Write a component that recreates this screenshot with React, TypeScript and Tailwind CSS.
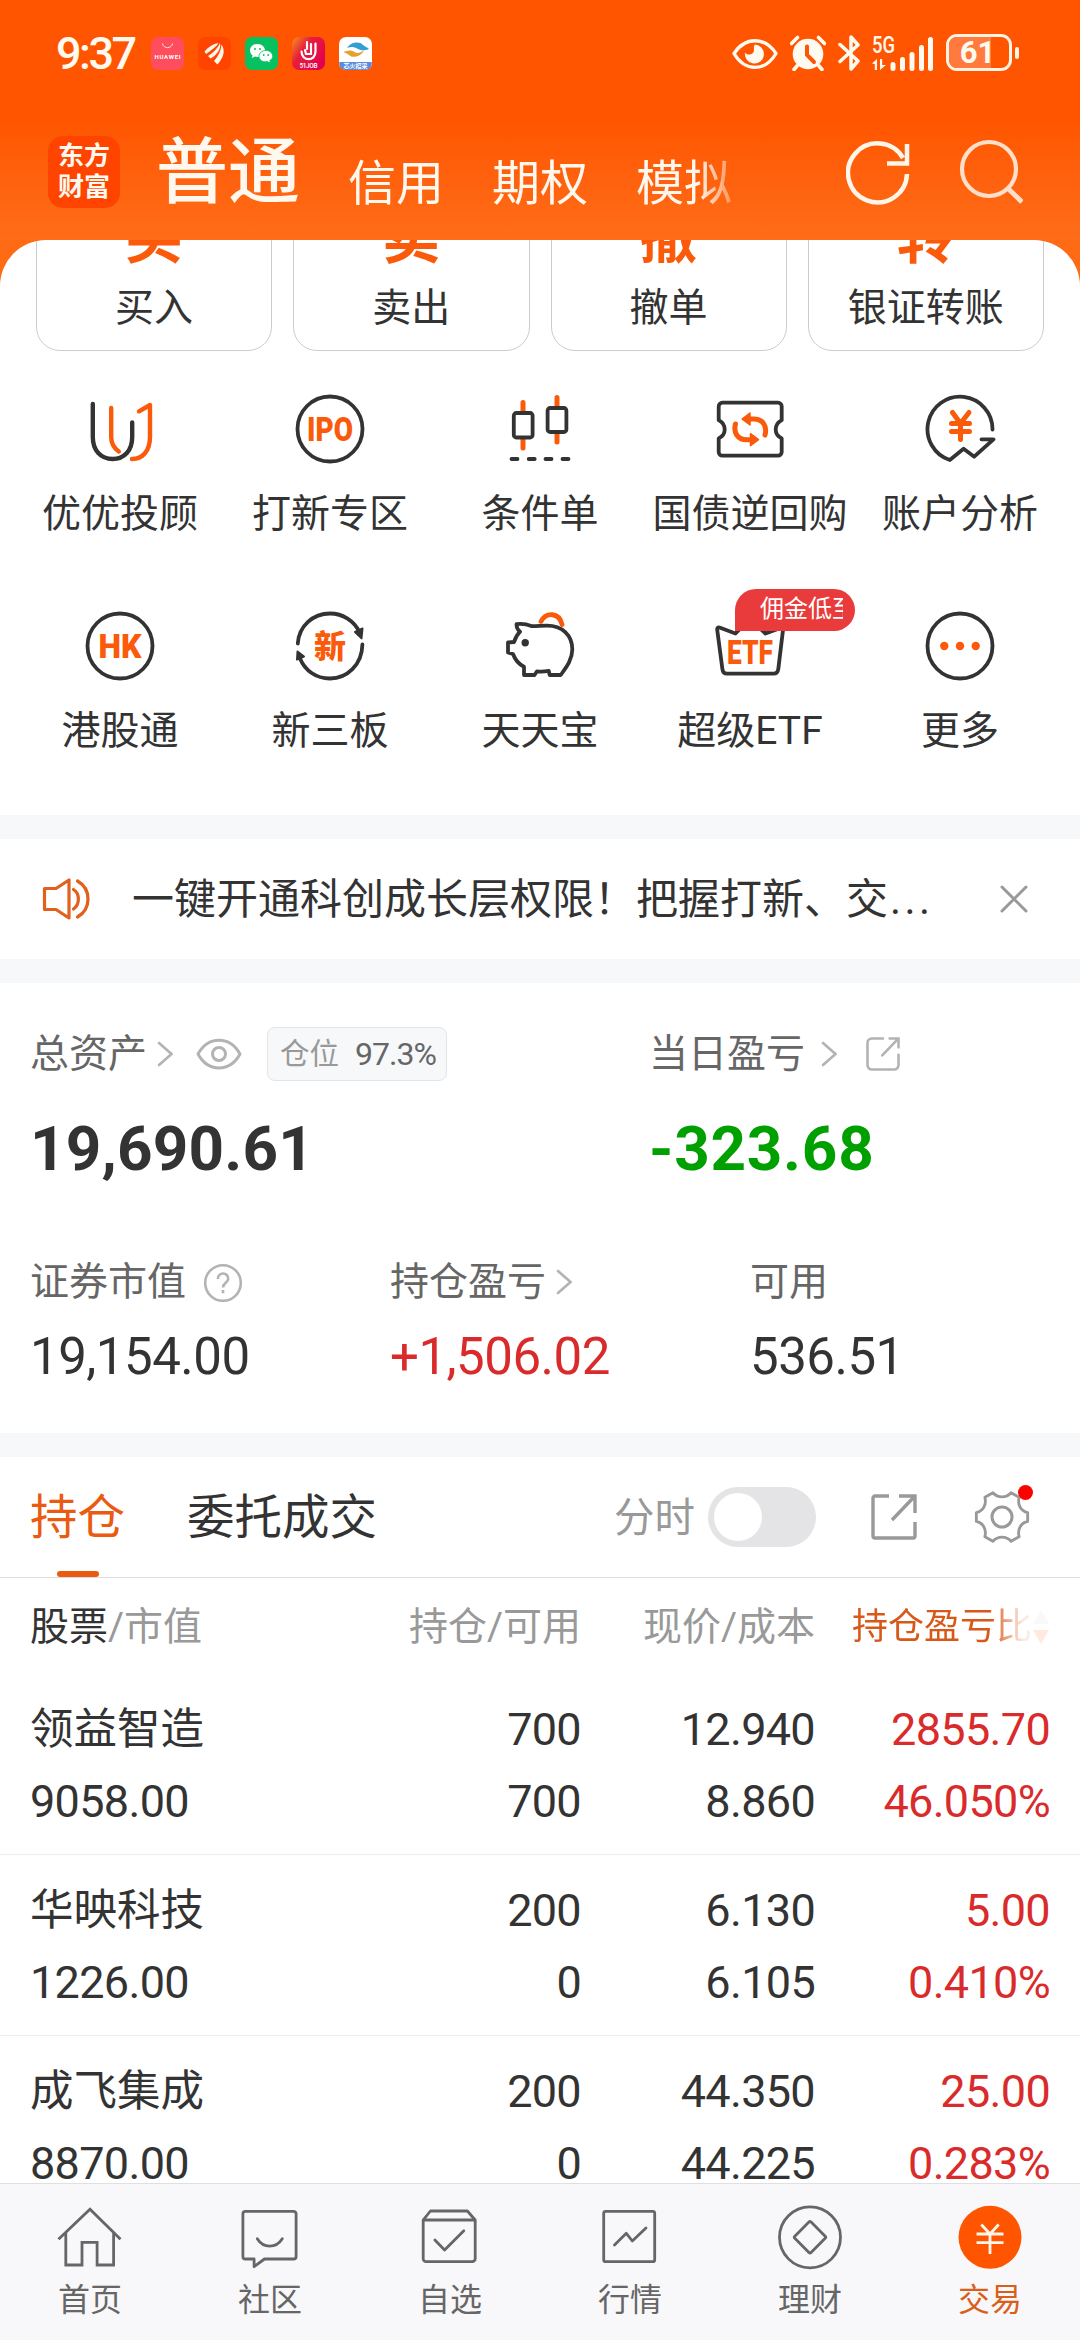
import React from 'react';
import clsx from 'clsx';

type Holding = {
  name: string;
  value: string;
  total: string;
  available: string;
  price: string;
  cost: string;
  profit: string;
  ratio: string;
};

const holdings: Holding[] = [
  { name: '领益智造', value: '9058.00', total: '700', available: '700', price: '12.940', cost: '8.860', profit: '2855.70', ratio: '46.050%' },
  { name: '华映科技', value: '1226.00', total: '200', available: '0', price: '6.130', cost: '6.105', profit: '5.00', ratio: '0.410%' },
  { name: '成飞集成', value: '8870.00', total: '200', available: '0', price: '44.350', cost: '44.225', profit: '25.00', ratio: '0.283%' },
];

const quickActions = [
  { glyph: '买', label: '买入' },
  { glyph: '卖', label: '卖出' },
  { glyph: '撤', label: '撤单' },
  { glyph: '转', label: '银证转账' },
];

const DARK = '#333333';
const ORANGE = '#fa5a0a';

const Icon = ({ children, className = 'size-[72px]' }: { children: React.ReactNode; className?: string }) => (
  <svg viewBox="0 0 72 72" fill="none" strokeLinecap="round" strokeLinejoin="round" className={clsx('block shrink-0', className)}>
    {children}
  </svg>
);

const IconText = ({ children, y = 47.5, size = 32, width }: { children: string; y?: number; size?: number; width?: number }) => (
  <text x="36" y={y} fontSize={size} fontWeight="900" textAnchor="middle" fill={ORANGE} textLength={width} lengthAdjust="spacingAndGlyphs">
    {children}
  </text>
);

const services = [
  {
    label: '优优投顾',
    icon: (
      <Icon>
        <g strokeWidth="4.4">
          <path d="M8.8 11v33c0 13.500 8 22 19.800 22s19.600-8.500 19.600-22V29.500" stroke={DARK} />
          <path d="M27.200 15v29c0 6.500 2.500 11 7.600 14.500M55 18.300l11-6.300v32c0 14-7.500 22-18 22" stroke={ORANGE} />
        </g>
      </Icon>
    ),
  },
  {
    label: '打新专区',
    icon: (
      <Icon>
        <circle cx="36" cy="36" r="32.500" stroke={DARK} strokeWidth="3.800" />
        <IconText width={46} size={33}>IPO</IconText>
      </Icon>
    ),
  },
  {
    label: '条件单',
    icon: (
      <Icon>
        <path d="M19 9.500V19M19 46v9M53 4.500V14M53 40v9" stroke={ORANGE} strokeWidth="5" />
        <g stroke={DARK} strokeWidth="3.800">
          <rect x="9.800" y="20" width="18.800" height="24.500" rx="2.500" />
          <rect x="43.600" y="15" width="18.800" height="24" rx="2.500" />
          <path d="M7.500 66h6M24.700 66h6M41.500 66h6M58.500 66h6" />
        </g>
      </Icon>
    ),
  },
  {
    label: '国债逆回购',
    icon: (
      <Icon>
        <path
          d="M8.400 9.700h55.600a3.700 3.700 0 0 1 3.700 3.700v13.800c-8 4.500-8 14 0 18.200v13.600a3.700 3.700 0 0 1-3.700 3.700H8.400a3.700 3.700 0 0 1-3.700-3.700V45.400c8-4.200 8-13.700 0-18.200V13.400a3.700 3.700 0 0 1 3.700-3.700z"
          stroke={DARK}
          strokeWidth="3.800"
        />
        <path d="M21.500 31c-2.500 9 2.500 15.700 11 15.700h5M51 42c2.500-9-2.500-16-11-16h-5" stroke={ORANGE} strokeWidth="5" />
        <path d="M28 26l8-6v12zM44.500 46.700l-8-6v12z" fill={ORANGE} stroke={ORANGE} strokeWidth="1.500" />
      </Icon>
    ),
  },
  {
    label: '账户分析',
    icon: (
      <Icon>
        <path d="M68.500 36.500A32.500 32.500 0 1 0 25.800 67l13.800-11.300 10.600 8 19.300-17.400H57.500" stroke={DARK} strokeWidth="3.800" />
        <path d="M28.500 19.500l8 11 8.500-11M36.500 31v15.500M27.500 30.500h18M27.500 38.500h18" stroke={ORANGE} strokeWidth="5" />
      </Icon>
    ),
  },
  {
    label: '港股通',
    icon: (
      <Icon>
        <circle cx="36" cy="36" r="32.500" stroke={DARK} strokeWidth="3.800" />
        <IconText width={43} size={33}>HK</IconText>
      </Icon>
    ),
  },
  {
    label: '新三板',
    icon: (
      <Icon>
        <path d="M3.800 33.500C5 16 19 3.500 36 3.500c13 0 24 7.500 29.500 18.500M68.400 34.500C68 55 53 68.500 36 68.500c-14 0-25-8-30-20" stroke={DARK} strokeWidth="3.800" />
        <path d="M61 22l7.500-3.500-1 9.800zM3.500 41.500l6.500 5-7 3z" fill={DARK} stroke={DARK} strokeWidth="2" />
        <IconText size={32} y={48}>新</IconText>
      </Icon>
    ),
  },
  {
    label: '天天宝',
    icon: (
      <Icon>
        <path
          d="M4 32.500v10l5 1.500c2 5.500 5.500 10 11 12.800V65h10.500l2.500-3.700c4 .5 7.500.3 11.700-.5l1 4.200h11c5-7 11.600-15 11.600-25.500C68.300 25 58 15.700 43 15.700c-5 0-9.500.5-15 .5-4.500-1.700-9.500-3-15.500-2 0 3 1 5.500 3.500 7.500-2.500 2.500-4.500 6-6 10.300z"
          stroke={DARK}
          strokeWidth="3.800"
        />
        <circle cx="21.200" cy="32.700" r="3.700" fill={DARK} />
        <path d="M37 11.500c5-9.500 18-9.500 21 3" stroke={ORANGE} strokeWidth="4.800" />
      </Icon>
    ),
  },
  {
    label: '超级ETF',
    badge: '佣金低至',
    icon: (
      <Icon>
        <path
          d="M5.500 17.500l16 6L36 9l15.500 14.500 15-5.500c1.800-.6 2.700.3 2.500 2l-4.700 39c-.4 3-2 4.700-4.700 4.700H13c-2.800 0-4.300-1.700-4.600-4.700L3.200 19.800c-.2-1.800.7-2.900 2.300-2.300z"
          stroke={DARK}
          strokeWidth="3.800"
        />
        <IconText y={53.5} width={46} size={33}>ETF</IconText>
      </Icon>
    ),
  },
  {
    label: '更多',
    icon: (
      <Icon>
        <circle cx="36" cy="36" r="32.500" stroke={DARK} strokeWidth="3.800" />
        <g fill={ORANGE}>
          <circle cx="20.300" cy="36" r="4.200" />
          <circle cx="36" cy="36" r="4.200" />
          <circle cx="51.700" cy="36" r="4.200" />
        </g>
      </Icon>
    ),
  },
];

const navItems = [
  { label: '首页', icon: <path d="M4.500 38.300L36 8.300l30.500 30M11.800 32v32H28V41.300h15.100V64h16.500V32" strokeLinecap="butt" strokeLinejoin="miter" /> },
  {
    label: '社区',
    icon: (
      <>
        <path d="M11.500 10.300h48a2.600 2.600 0 0 1 2.600 2.600v42.500a2.600 2.600 0 0 1-2.600 2.600H30.500l-10.400 7.700V58h-8.600a2.600 2.600 0 0 1-2.600-2.600V12.900a2.600 2.600 0 0 1 2.600-2.600z" />
        <path d="M23.300 37.700c6 9.800 18.800 9.800 25 0" />
      </>
    ),
  },
  {
    label: '自选',
    icon: (
      <>
        <path d="M9.200 19h52v38.700a3 3 0 0 1-3 3h-46a3 3 0 0 1-3-3zl7.200-9h37l7.800 9" />
        <path d="M20.900 39l9.700 10 19.200-19.300" />
      </>
    ),
  },
  {
    label: '行情',
    icon: (
      <>
        <rect x="9.700" y="10.300" width="51" height="50.400" rx="2" />
        <path d="M20.500 44l11.800-11.700 6 7.700L52 27" />
      </>
    ),
  },
  {
    label: '理财',
    icon: (
      <>
        <circle cx="36" cy="36.300" r="30.500" />
        <rect x="24.500" y="24.800" width="23" height="23" rx="1.500" transform="rotate(45 36 36.300)" />
      </>
    ),
  },
  {
    label: '交易',
    active: true,
    icon: (
      <>
        <circle cx="36" cy="36.300" r="31.500" fill="#ff5500" stroke="none" />
        <path d="M27.300 23.500L36 33l8.700-9.500M36 33v20M22.500 33h27M22.500 41.700h27" stroke="#fff6ea" strokeLinecap="butt" />
      </>
    ),
  },
];

const Chevron = ({ className }: { className?: string }) => (
  <svg viewBox="0 0 16 26" fill="none" stroke="#b3b3b3" strokeWidth="2.600" strokeLinecap="round" className={clsx('h-[26px] w-4 shrink-0', className)}>
    <path d="M2 2l12.500 11L2 24" />
  </svg>
);

const Share = ({ className, rounded }: { className?: string; rounded?: boolean }) => (
  <svg viewBox="0 0 46 46" fill="none" stroke="currentColor" strokeLinecap={rounded ? 'round' : 'butt'} className={clsx('shrink-0', className)}>
    <path d={rounded ? 'M23 2H8a6 6 0 0 0-6 6v30a6 6 0 0 0 6 6h30a6 6 0 0 0 6-6V24' : 'M18 2H4a2 2 0 0 0-2 2v38a2 2 0 0 0 2 2h38a2 2 0 0 0 2-2V28'} />
    <path d={rounded ? 'M32 2h12v12M43 3L22 25' : 'M28 2h16v17M43 3L21 26'} />
  </svg>
);

const StatusBar = () => (
  <div className="flex h-[108px] items-start pt-[34px] pr-[61px] pl-[56px]">
    <span className="mt-[1px] w-[83px] text-[45px] leading-[38px] font-medium tracking-[-0.055em] text-[#fffaf0]">9:37</span>
    <div className="mt-[3px] ml-3 flex gap-[14px]">
      <svg viewBox="0 0 33 33" className="size-[33px]">
        <rect width="33" height="33" rx="7" fill="#ff4d5e" />
        <path d="M11.500 6.500c.5 5.500 9.500 5.500 10 0" fill="none" stroke="#ffe0e0" strokeWidth="1" />
        <text x="16.500" y="21.500" fontSize="6" fontWeight="700" textAnchor="middle" textLength="26" fill="#fff">HUAWEI</text>
      </svg>
      <svg viewBox="0 0 33 33" className="size-[33px]">
        <rect width="33" height="33" rx="7" fill="#ff4400" />
        <path d="M6.500 14.500C10 10 15 7 20.500 6c-2 3.500-6.500 7-12.500 11zM10 19c5-3 9.500-7.500 12-12.800 1.500 5.500-3.500 12.300-9.500 15.300zM16 24c4-4.500 7-10 7.500-16.500 4 6 2.500 12.500-4 20z" fill="#fff6ea" />
      </svg>
      <svg viewBox="0 0 33 33" className="size-[33px]">
        <rect width="33" height="33" rx="7" fill="#07c160" />
        <path d="M12.500 7C8 7 5 10 5 13.500c0 2 1 3.700 2.600 4.900L7 21l3-1.500c5 1.500 10-1.500 10-6C20 10 17 7 12.500 7z" fill="#fff" />
        <path d="M21 13.500c-4 0-7 2.500-7 5.700 0 4 4 6.300 8.500 5.300l3 1.500-.7-2.500c1.700-1 2.900-2.600 2.900-4.300 0-3.200-2.900-5.700-6.700-5.700z" fill="#fff" stroke="#07c160" strokeWidth=".8" />
        <g fill="#07c160">
          <circle cx="10" cy="12" r="1" />
          <circle cx="15" cy="12" r="1" />
          <circle cx="18.700" cy="18" r=".9" />
          <circle cx="23.200" cy="18" r=".9" />
        </g>
      </svg>
      <svg viewBox="0 0 33 33" className="size-[33px]">
        <defs>
          <linearGradient id="job" x1="0" y1="0" x2="1" y2=".7">
            <stop offset="0" stopColor="#f7931e" />
            <stop offset=".4" stopColor="#e8203a" />
            <stop offset="1" stopColor="#e2004f" />
          </linearGradient>
        </defs>
        <rect width="33" height="33" rx="7" fill="url(#job)" />
        <path d="M9.500 14.500c0 10 14 10.500 14 0V6.500M13 13l1 4h5V7M15 5v7" fill="none" stroke="#fff" strokeWidth="2.200" strokeLinecap="round" />
        <text x="16.500" y="30.500" fontSize="6.500" fontWeight="500" textAnchor="middle" textLength="18" fill="#fff">51JOB</text>
      </svg>
      <svg viewBox="0 0 33 33" className="size-[33px]">
        <rect width="33" height="33" rx="7" fill="#ffffff" />
        <path d="M.3 25h32.400v2a6 6 0 0 1-6 6H6.300a6 6 0 0 1-6-6z" fill="#5a8be0" />
        <path d="M8 11c4-6 12-7 16-3 2 1.800 4 2 6 4-4 1.500-8 2-12-.5-3-1.500-6-2-10-.5z" fill="#2f9fd6" />
        <path d="M25 13c-2 6-11 9-15 5-2-1.500-3.500-2-5.500-3 4-2 8-2 11 0s6 1 9.500-2z" fill="#e5a032" />
        <text x="16.500" y="31" fontSize="6" fontWeight="700" textAnchor="middle" fill="#fff">芯火招采</text>
      </svg>
    </div>

    <div className="ml-auto flex items-center text-[#fffaf0]">
      <svg viewBox="0 0 46 36" className="h-9 w-[46px]" fill="none">
        <path d="M2 18.500C13 1.500 33 1.500 44 18.500 33 37 13 37 2 18.500z" stroke="currentColor" strokeWidth="3.300" strokeLinejoin="round" />
        <path d="M23 9.500a9.500 9.500 0 1 1-10 8c2 3.500 9 2.500 9-2.500 0-2.500-.5-4 1-5.500z" fill="currentColor" />
      </svg>
      <svg viewBox="0 0 36 36" className="ml-3 h-9 w-9" fill="none">
        <circle cx="18" cy="19" r="15.300" fill="currentColor" />
        <path d="M1.500 8.500L7.500 2.500M34.500 8.500l-6-6M7 31l-3 3.500M29 31l3 3.500" stroke="currentColor" strokeWidth="3.600" strokeLinecap="round" />
        <path d="M17 11.500V20l7 7" stroke="#ff5500" strokeWidth="4" strokeLinecap="round" />
      </svg>
      <svg viewBox="0 0 22 36" className="ml-3 h-9 w-[22px]" fill="none" stroke="currentColor" strokeWidth="3.500" strokeLinecap="round" strokeLinejoin="round">
        <path d="M2 9.500L20 26l-7 8V2l7 8L2 26.500" />
      </svg>
      <svg viewBox="0 0 64 36" className="ml-3 h-9 w-16" fill="currentColor">
        <text x="0" y="17.500" fontSize="23" fontWeight="500" textLength="23" lengthAdjust="spacingAndGlyphs">5G</text>
        <path d="M0 28.500l5-4.500v11H2.800v-6zM8 24h2.200v6H14L8 35z" />
        <rect x="18.500" y="27" width="5" height="9" rx="2.500" />
        <rect x="28" y="22" width="5" height="14" rx="2.500" />
        <rect x="37.500" y="17" width="5" height="19" rx="2.500" />
        <rect x="47" y="10" width="5" height="26" rx="2.500" />
        <rect x="56" y="2" width="5" height="34" rx="2.500" />
      </svg>
      <div className="ml-[10px] flex items-center">
        <div className="relative flex h-[37px] w-[66px] items-center justify-center overflow-hidden rounded-[11px] border-3 border-[#fff3e4]">
          <div className="absolute inset-y-0 left-0 w-[42px] bg-[#ff7a3c]" />
          <span className="relative mr-[3px] text-[31px] leading-[31px] font-bold">61</span>
        </div>
        <div className="ml-[3px] h-3 w-1 rounded-full bg-[#fff3e4]" />
      </div>
    </div>
  </div>
);

const TopTabs = () => (
  <div className="flex h-[132px] pl-12 text-[#fff8ee]">
    <div className="mt-7 flex size-[72px] flex-col items-center justify-center rounded-[15px] bg-[#ff4400] text-[26px] leading-[31px] font-bold">
      <span>东方</span>
      <span>财富</span>
    </div>
    <div className="ml-[36px] flex w-[620px] gap-12 pt-[17px] text-[48px] leading-[96px] [mask-image:linear-gradient(to_right,black_540px,transparent_595px)]">
      <span className="text-[72px] font-medium">普通</span>
      <span className="pt-[11px]">信用</span>
      <span className="pt-[11px]">期权</span>
      <span className="pt-[11px]">模拟</span>
    </div>
    <div className="ml-[70px] flex pt-7">
      <svg viewBox="0 0 64 72" className="h-[72px] w-16" fill="none" stroke="#fff6ea" strokeWidth="4.500">
        <path d="M61 38A29.500 29.500 0 1 1 57 22M61 8v19.500H41" />
      </svg>
      <svg viewBox="0 0 64 72" className="ml-[49px] h-[72px] w-16" fill="none" stroke="#ffdfc9" strokeWidth="4.200">
        <circle cx="30" cy="33" r="27" />
        <path d="M48.500 52L63 66" strokeWidth="5" />
      </svg>
    </div>
  </div>
);

const Gap = () => <div className="h-6 shrink-0 bg-[#f7f8fa]" />;

const AssetSummary = () => (
  <section className="h-[450px] pt-[39px] pl-[30px]">
    <div className="flex">
      <div className="w-[619px]">
        <div className="flex h-16 items-center">
          <span className="text-[39px] text-[#666666]">总资产</span>
          <Chevron className="ml-[10px]" />
          <svg viewBox="0 0 46 32" fill="none" stroke="#b3b3b3" strokeWidth="3" strokeLinejoin="round" className="ml-[23px] h-8 w-[46px]">
            <path d="M2 16C12-2.500 34-2.500 44 16 34 34.500 12 34.500 2 16z" />
            <circle cx="23" cy="16" r="6.500" />
          </svg>
          <div className="ml-[25px] flex h-[54px] w-[180px] items-center rounded-lg border border-[#e3e4e8] bg-[#f7f8fa] pl-3">
            <span className="text-[29.5px] text-[#999999]">仓位</span>
            <span className="ml-4 text-[32px] tracking-[-0.03em] text-[#666666]">97.3%</span>
          </div>
        </div>
        <p className="mt-[23px] text-[62px] leading-[80px] font-bold tracking-[0.003em]">19,690.61</p>
      </div>
      <div>
        <div className="flex h-16 items-center">
          <span className="text-[39px] text-[#666666]">当日盈亏</span>
          <Chevron className="ml-[16px]" />
          <Share rounded className="ml-[29px] size-[34px] stroke-[3.5] text-[#b3b3b3]" />
        </div>
        <p className="mt-[23px] text-[62px] leading-[80px] font-bold tracking-[0.012em] text-[#00a000]">-323.68</p>
      </div>
    </div>
    <div className="mt-[61px] grid grid-cols-[360px_360px_1fr] text-[51px] leading-[64px] tracking-[-0.01em]">
      <div>
        <div className="flex h-16 items-center text-[39px] tracking-normal text-[#666666]">
          证券市值
          <svg viewBox="0 0 40 40" fill="none" stroke="#b3b3b3" strokeWidth="2.600" className="mt-[2px] ml-[17px] size-10">
            <circle cx="20" cy="20" r="17.800" />
            <path d="M14.800 16c0-7.500 10.800-7 10.400 0-.2 3.800-5.200 3.800-5.200 8.500M20 27v3.200" />
          </svg>
        </div>
        <p className="mt-[11px]">19,154.00</p>
      </div>
      <div>
        <div className="flex h-16 items-center text-[39px] tracking-normal text-[#666666]">
          持仓盈亏
          <Chevron className="ml-[10px]" />
        </div>
        <p className="mt-[11px] text-[#d92b2b]">+1,506.02</p>
      </div>
      <div>
        <div className="flex h-16 items-center text-[39px] tracking-normal text-[#666666]">可用</div>
        <p className="mt-[11px]">536.51</p>
      </div>
    </div>
  </section>
);

const HoldingTabs = () => (
  <div className="relative flex h-[121px] shrink-0 items-center border-b border-[#dedede] pl-[30px] text-[47.5px]">
    <span className="pt-[3px] text-[#ea5a10]">持仓</span>
    <span className="ml-[62px] pt-[3px]">委托成交</span>
    <span className="ml-auto pt-[2px] text-[40.5px] text-[#999999]">分时</span>
    <div className="ml-[13px] flex h-[60px] w-[108px] items-center rounded-full bg-[#e4e4e6] pl-[6px]">
      <div className="size-12 rounded-full bg-white" />
    </div>
    <Share className="ml-[55px] size-[46px] stroke-[3.4] text-[#999999]" />
    <div className="relative mr-[50px] ml-[57px]">
      <svg viewBox="0 0 56 56" fill="none" stroke="#999999" strokeWidth="3" strokeLinejoin="round" className="size-[56px]">
        <path d="M18.500 2.500c5 5.800 14 5.800 19 0l8.500 4.800c-2 8 2 14.500 9 16v9.400c-7 1.500-11 8-9 16l-8.500 4.800c-5-5.800-14-5.800-19 0L10 48.700c2-8-2-14.500-9-16v-9.400c7-1.500 11-8 9-16z" transform="translate(1.400 1.400) scale(.95)" />
        <circle cx="28" cy="28" r="10" />
      </svg>
      <i className="absolute -top-[4px] -right-[3px] size-[15px] rounded-full bg-[#ff0000]" />
    </div>
    <i className="absolute bottom-0 left-[57px] h-[6px] w-[42px] rounded-full bg-[#ea5a10]" />
  </div>
);

const HoldingList = () => (
  <section>
    <div className="grid h-[96px] grid-cols-[300px_251px_234px_1fr] items-center pt-[2px] pl-[30px] text-[39px] text-[#999999]">
      <span>
        <span className="text-[#333333]">股票</span>/市值
      </span>
      <span className="text-right">持仓/可用</span>
      <span className="text-right">现价/成本</span>
      <div className="flex items-center pl-[37px] text-[36px] whitespace-nowrap text-[#d8581a] [mask-image:linear-gradient(to_right,black_175px,rgba(0,0,0,0.12)_208px)]">
        持仓盈亏比
        <svg viewBox="0 0 16 36" className="ml-[1px] h-9 w-4 shrink-0">
          <path d="M8 1l8 14H0z" fill="#cccccc" />
          <path d="M8 35l8-14H0z" fill="#ff5500" />
        </svg>
      </div>
    </div>
    {holdings.map((h, index) => (
      <div
        key={h.name}
        className={clsx(
          'grid h-[181px] grid-cols-[300px_251px_234px_1fr] border-[#ececec] pt-[20px] pr-[30px] pl-[30px] text-[45px] leading-[72px] tracking-[-0.015em]',
          index < holdings.length - 1 && 'border-b'
        )}
      >
        <div>
          <p className="text-[43.5px] tracking-normal">{h.name}</p>
          <p>{h.value}</p>
        </div>
        <div className="text-right">
          <p>{h.total}</p>
          <p>{h.available}</p>
        </div>
        <div className="text-right">
          <p>{h.price}</p>
          <p>{h.cost}</p>
        </div>
        <div className="text-right text-[#d92b2b]">
          <p>{h.profit}</p>
          <p>{h.ratio}</p>
        </div>
      </div>
    ))}
  </section>
);

export default function App() {
  return (
    <div className="flex h-[2340px] w-[1080px] flex-col overflow-hidden bg-white font-[Roboto,'Noto_Sans_CJK_SC',sans-serif] text-[#333333]">
      <header className="h-[240px] shrink-0 bg-linear-to-b from-[#ff5500] from-50% to-[#ff6d18]">
        <StatusBar />
        <TopTabs />
      </header>

      <main className="min-h-0 flex-1 overflow-hidden bg-[#ff6a14]">
        <div className="h-full overflow-hidden rounded-t-[46px] bg-white">
          {/* shortcut cards are scrolled half way under the header */}
          <div className="-mt-[50px] flex h-[161px] gap-[21px] px-9">
            {quickActions.map((a) => (
              <div key={a.label} className="flex flex-1 flex-col items-center rounded-[24px] border border-[#cccccc]">
                <span className="mt-[17px] text-[58px] leading-[60px] font-bold text-[#fa5a0a]">{a.glyph}</span>
                <span className="mt-[16px] text-[39px] leading-[48px]">{a.label}</span>
              </div>
            ))}
          </div>

          <div className="grid h-[464px] grid-cols-5 content-start px-[15px] pt-[42px]">
            {services.map((s) => (
              <div key={s.label} className="relative flex h-[217px] flex-col items-center">
                {s.icon}
                {s.badge && (
                  <div className="absolute -top-[21px] left-[90px] h-[42px] w-[120px] rounded-[21px] rounded-bl-none bg-[#e93b3b] pl-[25px]">
                    <div className="w-[83px] overflow-hidden text-[24px] leading-[41px] whitespace-nowrap text-white">{s.badge}</div>
                  </div>
                )}
                <span className="mt-[25px] text-[39px] leading-[48px] whitespace-nowrap">{s.label}</span>
              </div>
            ))}
          </div>

          <Gap />
          <div className="flex h-[120px] items-center pl-[42px]">
            <svg viewBox="0 0 48 44" fill="none" stroke="#e2601c" strokeWidth="3.200" strokeLinejoin="round" strokeLinecap="round" className="h-11 w-12">
              <path d="M2.500 11.500h11.500L27 3v38L14 32.500H2.500zM31.500 12.500c6.500 4 6.500 15 0 19.500M35.500 4c14 8 14 28 0 36" />
            </svg>
            <p className="ml-[42px] w-[850px] pt-[1px] text-[42px] whitespace-nowrap">
              一键开通科创成长层权限！把握打新、交<span className="ml-[2px] tracking-[0.08em]">...</span>
            </p>
            <svg viewBox="0 0 28 28" stroke="#999999" strokeWidth="3" strokeLinecap="round" className="ml-[18px] size-7">
              <path d="M2 2l24 24M26 2L2 26" />
            </svg>
          </div>
          <Gap />
          <AssetSummary />
          <Gap />
          <HoldingTabs />
          <HoldingList />
        </div>
      </main>

      <nav className="grid h-[157px] shrink-0 grid-cols-6 border-t border-[#e0e0e0] bg-[#f8f8fb] pt-[17px]">
        {navItems.map((n) => (
          <div key={n.label} className={clsx('flex flex-col items-center', n.active ? 'text-[#d8601a]' : 'text-[#666666]')}>
            <svg viewBox="0 0 72 72" fill="none" stroke="currentColor" strokeWidth="2.800" strokeLinejoin="round" strokeLinecap="round" className="size-[72px]">
              {n.icon}
            </svg>
            <span className="mt-[7px] text-[32px] leading-[40px]">{n.label}</span>
          </div>
        ))}
      </nav>
    </div>
  );
}
